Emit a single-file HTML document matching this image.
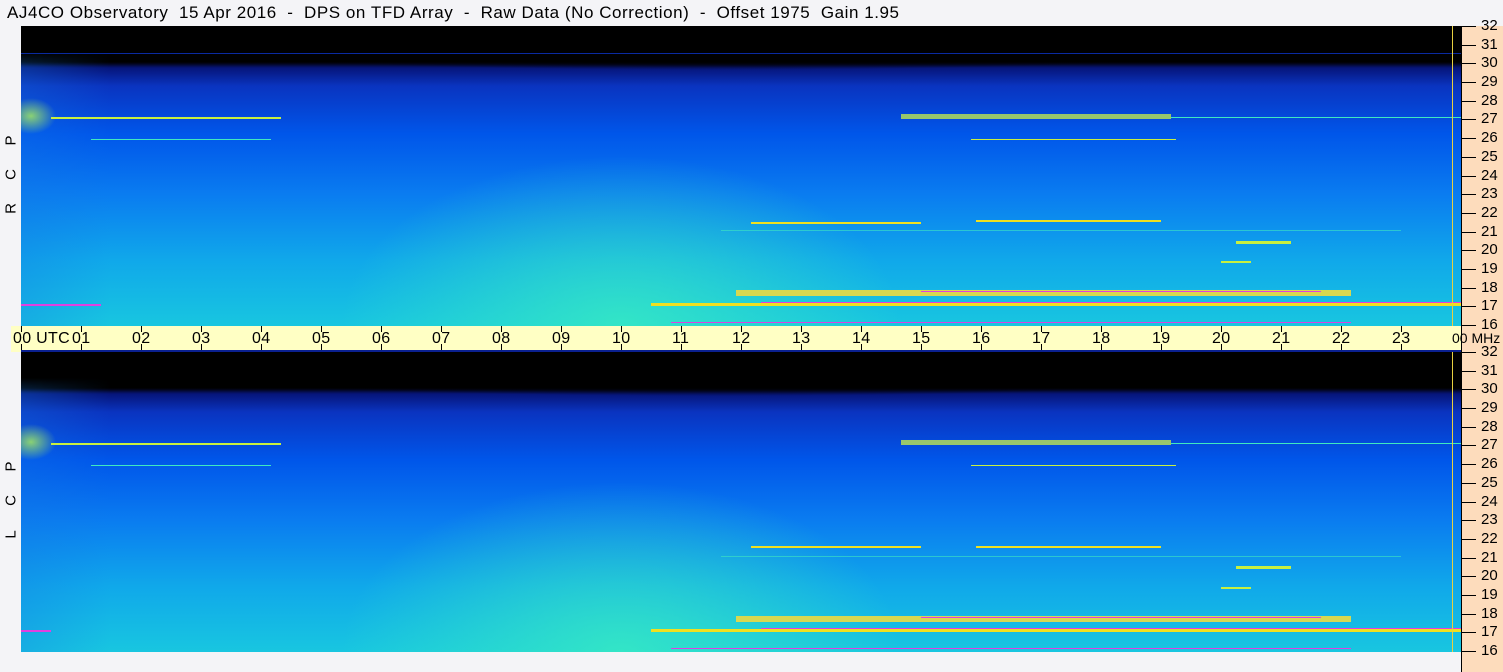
<!DOCTYPE html>
<html><head><style>
*{margin:0;padding:0;box-sizing:border-box}
body{width:1503px;height:672px;background:#f4f4f7;position:relative;overflow:hidden;font-family:"Liberation Sans",sans-serif}
.title{position:absolute;left:7px;top:3px;font-size:17px;letter-spacing:0.55px;white-space:pre;color:#000}
.spec{position:absolute;left:21px;width:1440px;height:300px;overflow:hidden;
background:
radial-gradient(ellipse 280px 170px at 600px 300px,rgba(60,240,190,.75),rgba(60,240,190,0)),
linear-gradient(to right,rgba(20,120,230,.3) 0,rgba(20,120,230,0) 90px),
linear-gradient(to bottom,#000 0,#000 12%,#06157a 14%,#0a34c0 20%,#0056ea 36%,#0a7cf0 56%,#10a8ea 78%,#18c6e0 100%);}
.blk{position:absolute;left:0;top:0;width:1440px;height:48px;background:radial-gradient(ellipse 760px 44px at 700px 0,#000 75%,rgba(0,0,0,0) 100%),linear-gradient(#000 0,#000 26px,rgba(0,0,0,0) 40px)}
.s{position:absolute;height:2px}
.yl{background:#c8f040}.yy{background:#f0e020}.pk{background:#e040e0}.gc{background:#40e8c0}
.vl{position:absolute;left:1431px;top:0;width:1px;height:300px;background:#e8d040}
.right{position:absolute;left:1461px;top:26px;width:42px;height:646px;background:#fddcbc;border-left:1px solid #000}
.tk{position:absolute;left:1461px;width:15px;height:1px;background:#000}
.tl{position:absolute;left:1481px;font-size:15px;line-height:15px}
.band{position:absolute;left:11px;top:326px;width:1450px;height:26px;background:#ffffc4}
.bl{position:absolute;left:21px;top:350px;width:1440px;height:2px;background:#0a2090}
.ht{position:absolute;width:1px;height:6px;background:#000}
.hl{position:absolute;top:330px;font-size:16px;letter-spacing:0.3px;white-space:nowrap}
.lab{position:absolute;left:2px;font-size:15px;transform:rotate(-90deg);transform-origin:center;width:18px;text-align:center}
.glow{position:absolute;left:0;top:70px;width:50px;height:40px;background:radial-gradient(ellipse 25px 18px at 10px 20px,rgba(170,240,90,.8),rgba(170,240,90,0))}
</style></head><body>
<div class="title">AJ4CO Observatory  15 Apr 2016  -  DPS on TFD Array  -  Raw Data (No Correction)  -  Offset 1975  Gain 1.95</div>

<div class="spec" style="top:26px">
<div class="blk"></div>
<div class="s" style="left:0;top:27px;width:1440px;height:1px;background:#0a2aa0"></div>
<div class="glow"></div>
<div class="s yl" style="left:30px;top:91px;width:230px"></div>
<div class="s" style="left:880px;top:88px;width:270px;height:5px;background:rgba(190,230,80,.8)"></div>
<div class="s gc" style="left:1150px;top:91px;width:290px;height:1px"></div>
<div class="s gc" style="left:70px;top:113px;width:180px;height:1px"></div>
<div class="s yl" style="left:950px;top:113px;width:205px;height:1px"></div>
<div class="s yy" style="left:730px;top:196px;width:170px"></div>
<div class="s yy" style="left:955px;top:194px;width:185px"></div>
<div class="s gc" style="left:700px;top:204px;width:680px;height:1px;opacity:.6"></div>
<div class="s yl" style="left:1215px;top:215px;width:55px;height:3px"></div>
<div class="s yl" style="left:1200px;top:235px;width:30px"></div>
<div class="s" style="left:715px;top:264px;width:615px;height:6px;background:#d8d850"></div>
<div class="s pk" style="left:900px;top:265px;width:400px;height:1px"></div>
<div class="s yy" style="left:630px;top:277px;width:810px;height:3px"></div>
<div class="s pk" style="left:740px;top:276px;width:700px;height:1px"></div>
<div class="s pk" style="left:0;top:278px;width:80px"></div>
<div class="s pk" style="left:650px;top:296px;width:680px;height:1px"></div>
<div class="vl"></div>
</div>

<div class="spec" style="top:352px">
<div class="blk"></div>
<div class="glow"></div>
<div class="s yl" style="left:30px;top:91px;width:230px"></div>
<div class="s" style="left:880px;top:88px;width:270px;height:5px;background:rgba(190,230,80,.8)"></div>
<div class="s gc" style="left:1150px;top:91px;width:290px;height:1px"></div>
<div class="s gc" style="left:70px;top:113px;width:180px;height:1px"></div>
<div class="s yl" style="left:950px;top:113px;width:205px;height:1px"></div>
<div class="s yy" style="left:730px;top:194px;width:170px"></div>
<div class="s yy" style="left:955px;top:194px;width:185px"></div>
<div class="s gc" style="left:700px;top:204px;width:680px;height:1px;opacity:.6"></div>
<div class="s yl" style="left:1215px;top:214px;width:55px;height:3px"></div>
<div class="s yl" style="left:1200px;top:235px;width:30px"></div>
<div class="s" style="left:715px;top:264px;width:615px;height:6px;background:#d8d850"></div>
<div class="s pk" style="left:900px;top:265px;width:400px;height:1px"></div>
<div class="s yy" style="left:630px;top:277px;width:810px;height:3px"></div>
<div class="s pk" style="left:740px;top:276px;width:700px;height:1px"></div>
<div class="s pk" style="left:0;top:278px;width:30px"></div>
<div class="s pk" style="left:650px;top:296px;width:680px;height:1px"></div>
<div class="vl"></div>
</div>

<div class="band"></div>
<div class="bl"></div>
<div class="right"></div>

<div class="lab" style="top:200px">R</div>
<div class="lab" style="top:166px">C</div>
<div class="lab" style="top:132px">P</div>
<div class="lab" style="top:526px">L</div>
<div class="lab" style="top:492px">C</div>
<div class="lab" style="top:458px">P</div>

<div id="ax"></div>
<script>
let h='';
for(let i=0;i<=16;i++){
 let v=32-i;
 for(const base of [26,352]){
  let y=Math.round(base+i*299/16);
  h+=`<div class="tk" style="top:${y}px"></div><div class="tl" style="top:${y-8}px">${v}</div>`;
 }
}
for(let i=0;i<=24;i++){
 let x=21+i*60;
 h+=`<div class="ht" style="left:${x}px;top:326px"></div><div class="ht" style="left:${x}px;top:344px"></div>`;
 let t=String(i%24).padStart(2,'0');
 if(i==0) h+=`<div class="hl" style="left:13px">00  UTC</div>`;
 else if(i==24) h+=`<div class="hl" style="left:1452px;font-size:14px;letter-spacing:0">00 MHz</div>`;
 else h+=`<div class="hl" style="left:${x-9}px">${t}</div>`;
}
document.getElementById('ax').innerHTML=h;
</script>
</body></html>
